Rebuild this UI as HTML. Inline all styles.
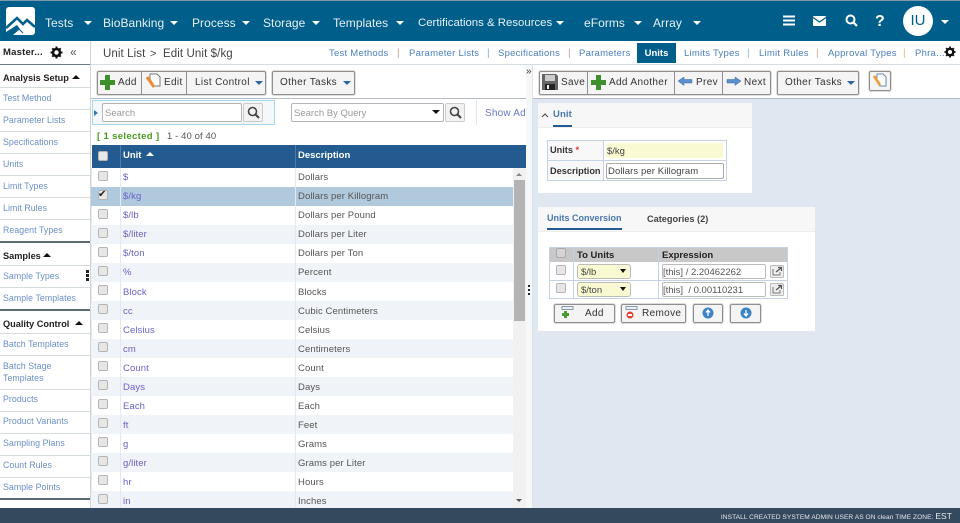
<!DOCTYPE html>
<html><head><meta charset="utf-8">
<style>
html,body{margin:0;padding:0;width:960px;height:523px;overflow:hidden;background:#fff}
body{position:relative;font-family:"Liberation Sans",sans-serif;font-size:9.5px;color:#444;filter:blur(.3px)}
div,span.a,svg{position:absolute}
.t{white-space:nowrap;height:14px;line-height:14px;margin-top:1px}
.n{color:#e8f0f5;font-size:12px;letter-spacing:.05px}
.l{color:#4a7fc0;font-size:9.5px;letter-spacing:.25px}
.s{color:#6a8fc8;font-size:8.8px;letter-spacing:.05px;left:3px;margin-top:0}
.h{color:#222;font-weight:bold;font-size:9.2px;left:3px}
.sl{height:1px;left:0;width:90px;background:#d5dcdc}
.dl{height:2px;left:0;width:90px;background:#5a6a72}
.u{color:#6a62c8;left:123px;font-size:9.5px;letter-spacing:.1px}
.d{color:#555;left:298px;font-size:9.5px;letter-spacing:.1px}
.cb{width:8px;height:8px;background:#e6e6e6;border:1px solid #b4b4b4;border-radius:2px}
.row{left:91px;width:422px;height:19px}
.alt{background:#f0f3f7}
.btn{background:#f4f4f4;border:1px solid #8f8f8f;border-radius:2px;box-shadow:0 0 0 1px #ddd;box-sizing:border-box}
.sep{width:1px;background:#8f8f8f;top:71px;height:24px}
.b{color:#333;font-size:10px;letter-spacing:.35px}
.tri{width:0;height:0;border-left:4px solid transparent;border-right:4px solid transparent;border-top:4px solid #fff}
.btri{width:0;height:0;border-left:4px solid transparent;border-right:4px solid transparent;border-top:4px solid #2a66a8}
.ktri{width:0;height:0;border-left:3px solid transparent;border-right:3px solid transparent;border-top:4px solid #111}
.up{width:0;height:0;border-left:4px solid transparent;border-right:4px solid transparent;border-bottom:4px solid #111}
.bar{color:#c99;font-size:10px}
</style></head><body>

<!-- top nav -->
<div style="left:0;top:0;width:960px;height:41px;background:#005e8a"></div>
<div style="left:0;top:0;width:960px;height:1px;background:#7c9aa8"></div>
<svg style="left:6px;top:7px" width="29" height="28" viewBox="0 0 29 28"><rect x="0" y="0" width="29" height="28" rx="3" fill="#fff"/><path d="M0 21 L11 11 L17 17 L21 13 L29 20" fill="none" stroke="#005e8a" stroke-width="2.600"/><path d="M0 25 L0 28 L7 28 L14 22 L11 18Z" fill="#005e8a"/><path d="M0 29 L10 19 L17 26" fill="none" stroke="#005e8a" stroke-width="1"/></svg>
<div class="t n" style="left:45px;top:15px">Tests</div><div class="tri" style="left:84px;top:21px"></div>
<div class="t n" style="left:103px;top:15px">BioBanking</div><div class="tri" style="left:170px;top:21px"></div>
<div class="t n" style="left:192px;top:15px">Process</div><div class="tri" style="left:242px;top:21px"></div>
<div class="t n" style="left:263px;top:15px">Storage</div><div class="tri" style="left:312px;top:21px"></div>
<div class="t n" style="left:333px;top:15px">Templates</div><div class="tri" style="left:396px;top:21px"></div>
<div class="t n" style="left:418px;top:15px;font-size:11.4px;letter-spacing:0">Certifications &amp; Resources</div><div class="tri" style="left:556px;top:21px"></div>
<div class="t n" style="left:584px;top:15px">eForms</div><div class="tri" style="left:634px;top:21px"></div>
<div class="t n" style="left:653px;top:15px">Array</div><div class="tri" style="left:693px;top:21px"></div>
<svg style="left:782px;top:14px" width="14" height="13"><path d="M1 2.500H13M1 6.500H13M1 10.500H13" stroke="#fff" stroke-width="2"/></svg>
<svg style="left:813px;top:16px" width="13" height="10"><rect width="13" height="10" rx="1" fill="#fff"/><path d="M0 1.500L6.500 6L13 1.500" fill="none" stroke="#005e8a" stroke-width="1.200"/></svg>
<svg style="left:845px;top:14px" width="13" height="13"><circle cx="5.500" cy="5.500" r="4" fill="none" stroke="#fff" stroke-width="2"/><path d="M8.500 8.500L12 12" stroke="#fff" stroke-width="2.200"/></svg>
<div class="t" style="left:875px;top:14px;font-size:16px;font-weight:bold;color:#fff">?</div>
<div style="left:903px;top:6px;width:30px;height:30px;border-radius:50%;background:#fff"></div>
<div class="t" style="left:903px;top:13px;width:30px;text-align:center;font-size:15px;color:#005e8a">IU</div>
<div class="tri" style="left:941px;top:20px"></div>

<!-- sidebar -->
<div style="left:90px;top:41px;width:1px;height:467px;background:#d0d5da"></div>
<div class="t" style="left:3px;top:45px;font-weight:bold;color:#222;font-size:9.5px;letter-spacing:.2px">Master...</div>
<svg style="left:50px;top:46px" width="13" height="13" viewBox="0 0 13 13"><circle cx="6.500" cy="6.500" r="3.500" fill="none" stroke="#111" stroke-width="2.600"/><path d="M6.500 0.500V3M6.500 10V12.500M0.500 6.500H3M10 6.500H12.500M2.300 2.300L4 4M9 9L10.700 10.700M2.300 10.700L4 9M9 4L10.700 2.300" stroke="#111" stroke-width="2"/></svg>
<div class="t" style="left:70px;top:44px;color:#555;font-size:12px">«</div>
<div style="left:0;top:64px;width:90px;height:1px;background:#6b7b85"></div>
<div class="t h" style="top:70px">Analysis Setup</div><div class="up" style="left:72px;top:75px"></div>
<div class="sl" style="top:87px"></div>
<div class="t s" style="top:91px">Test Method</div><div class="sl" style="top:109px"></div>
<div class="t s" style="top:113px">Parameter Lists</div><div class="sl" style="top:131px"></div>
<div class="t s" style="top:135px">Specifications</div><div class="sl" style="top:153px"></div>
<div class="t s" style="top:157px">Units</div><div class="sl" style="top:175px"></div>
<div class="t s" style="top:179px">Limit Types</div><div class="sl" style="top:197px"></div>
<div class="t s" style="top:201px">Limit Rules</div><div class="sl" style="top:219px"></div>
<div class="t s" style="top:223px">Reagent Types</div>
<div class="dl" style="top:241px"></div>
<div class="t h" style="top:248px">Samples</div><div class="up" style="left:43px;top:253px"></div>
<div class="sl" style="top:265px"></div>
<div class="t s" style="top:269px">Sample Types</div><div class="sl" style="top:287px"></div>
<div style="left:86px;top:270px;width:3px;height:3px;background:#222"></div><div style="left:86px;top:274px;width:3px;height:3px;background:#222"></div><div style="left:86px;top:278px;width:3px;height:3px;background:#222"></div>
<div class="t s" style="top:291px">Sample Templates</div>
<div class="dl" style="top:309px"></div>
<div class="t h" style="top:316px">Quality Control</div><div class="up" style="left:75px;top:321px"></div>
<div class="sl" style="top:333px"></div>
<div class="t s" style="top:337px">Batch Templates</div><div class="sl" style="top:355px"></div>
<div class="t s" style="top:359px">Batch Stage</div><div class="t s" style="top:371px">Templates</div><div class="sl" style="top:389px"></div>
<div class="t s" style="top:392px">Products</div><div class="sl" style="top:411px"></div>
<div class="t s" style="top:414px">Product Variants</div><div class="sl" style="top:433px"></div>
<div class="t s" style="top:436px">Sampling Plans</div><div class="sl" style="top:455px"></div>
<div class="t s" style="top:458px">Count Rules</div><div class="sl" style="top:477px"></div>
<div class="t s" style="top:480px">Sample Points</div>
<div class="dl" style="top:498px"></div>

<!-- breadcrumb / tabs -->
<div class="t" style="left:103px;top:46px;font-size:11.5px;color:#444;letter-spacing:.1px">Unit List</div>
<div class="t" style="left:150px;top:46px;font-size:11px;color:#444">&gt;</div>
<div class="t" style="left:163px;top:46px;font-size:11.5px;color:#444;letter-spacing:.1px">Edit Unit $/kg</div>
<div class="t l" style="left:329px;top:46px">Test Methods</div><div class="t bar" style="left:397px;top:46px">|</div>
<div class="t l" style="left:409px;top:46px">Parameter Lists</div><div class="t bar" style="left:487px;top:46px;color:#8ab">|</div>
<div class="t l" style="left:498px;top:46px">Specifications</div><div class="t bar" style="left:568px;top:46px">|</div>
<div class="t l" style="left:579px;top:46px">Parameters</div>
<div style="left:637px;top:43px;width:39px;height:20px;background:#005e8a"></div>
<div class="t" style="left:637px;top:46px;width:39px;text-align:center;color:#fff;font-size:9.500px;font-weight:bold">Units</div>
<div class="t l" style="left:684px;top:46px">Limits Types</div><div class="t bar" style="left:747px;top:46px;color:#8bb">|</div>
<div class="t l" style="left:759px;top:46px">Limit Rules</div><div class="t bar" style="left:816px;top:46px;color:#ca8">|</div>
<div class="t l" style="left:828px;top:46px">Approval Types</div><div class="t bar" style="left:903px;top:46px;color:#db7">|</div>
<div class="t l" style="left:915px;top:46px">Phra...</div>
<svg style="left:944px;top:46px" width="12" height="12" viewBox="0 0 13 13"><circle cx="6.500" cy="6.500" r="3.500" fill="none" stroke="#111" stroke-width="2.600"/><path d="M6.500 0.500V3M6.500 10V12.500M0.500 6.500H3M10 6.500H12.500M2.300 2.300L4 4M9 9L10.700 10.700M2.300 10.700L4 9M9 4L10.700 2.300" stroke="#111" stroke-width="2"/></svg>
<div style="left:91px;top:64px;width:869px;height:1px;background:#d5dce2"></div>

<!-- left toolbar -->
<div class="btn" style="left:97px;top:71px;width:169px;height:24px"></div>
<div class="sep" style="left:141px"></div><div class="sep" style="left:186px"></div>
<svg style="left:100px;top:75px" width="15" height="15"><path d="M5 0H10V5H15V10H10V15H5V10H0V5H5Z" fill="#3f8f2c"/></svg>
<div class="t b" style="left:118px;top:75px">Add</div>
<svg style="left:146px;top:73px" width="15" height="17"><path d="M4 1H11L14 4V13H8L4 6Z" fill="#fff" stroke="#777"/><path d="M1 4L8 14" stroke="#ee8a30" stroke-width="3"/></svg>
<div class="t b" style="left:164px;top:75px">Edit</div>
<div class="t b" style="left:195px;top:75px">List Control</div><div class="btri" style="left:255px;top:81px"></div>
<div class="btn" style="left:272px;top:71px;width:83px;height:24px"></div>
<div class="t b" style="left:280px;top:75px">Other Tasks</div><div class="btri" style="left:343px;top:81px"></div>

<!-- splitter -->
<div style="left:526px;top:65px;width:7px;height:443px;background:#f5f7f9"></div>
<div style="left:532px;top:65px;width:1px;height:443px;background:#dfe4ea"></div>
<div class="t" style="left:526px;top:64px;font-size:10px;color:#333">»</div>
<div style="left:528px;top:285px;width:2px;height:2px;background:#222"></div><div style="left:528px;top:289px;width:2px;height:2px;background:#222"></div><div style="left:528px;top:293px;width:2px;height:2px;background:#222"></div>

<!-- list region -->
<div style="left:91px;top:98px;width:435px;height:1px;background:#b5bcc4"></div>
<div style="left:92px;top:100px;width:183px;height:25px;border:1px solid #a8d4ee;box-sizing:border-box;background:#f4f8fb"></div>
<div style="left:94px;top:110px;width:0;height:0;border-top:3px solid transparent;border-bottom:3px solid transparent;border-left:4px solid #3a78b0"></div>
<div style="left:102px;top:103px;width:140px;height:19px;background:#fff;border:1px solid #b5b5b5;border-radius:2px;box-sizing:border-box"></div>
<div class="t" style="left:105px;top:106px;color:#999;font-size:9.500px">Search</div>
<div style="left:243px;top:103px;width:20px;height:19px;background:#f2f2f2;border:1px solid #ccc;border-radius:2px;box-sizing:border-box"></div>
<svg style="left:247px;top:106px" width="13" height="13"><circle cx="5.500" cy="5.500" r="4" fill="none" stroke="#444" stroke-width="1.600"/><path d="M8.500 8.500L12 12" stroke="#444" stroke-width="2"/></svg>
<div style="left:291px;top:103px;width:153px;height:19px;background:#fff;border:1px solid #b5b5b5;border-radius:2px;box-sizing:border-box"></div>
<div class="t" style="left:294px;top:106px;color:#999;font-size:9.500px">Search By Query</div>
<div class="ktri" style="left:432px;top:110px;border-left-width:4px;border-right-width:4px"></div>
<div style="left:445px;top:103px;width:20px;height:19px;background:#f2f2f2;border:1px solid #ccc;border-radius:2px;box-sizing:border-box"></div>
<svg style="left:449px;top:106px" width="13" height="13"><circle cx="5.500" cy="5.500" r="4" fill="none" stroke="#444" stroke-width="1.600"/><path d="M8.500 8.500L12 12" stroke="#444" stroke-width="2"/></svg>
<div style="left:476px;top:100px;width:1px;height:25px;background:#dce6ee"></div>
<div class="t" style="left:485px;top:106px;color:#6a78c8;font-size:10px;letter-spacing:.2px;width:41px;overflow:hidden">Show Ad</div>
<div style="left:91px;top:125px;width:435px;height:20px;background:#fff"></div>
<div class="t" style="left:97px;top:129px;color:#4a9a20;font-weight:bold;font-size:9.500px;letter-spacing:.35px">[ 1 selected ]</div>
<div class="t" style="left:167px;top:129px;color:#555;font-size:9.500px;letter-spacing:.1px">1 - 40 of 40</div>

<!-- table header -->
<div style="left:92px;top:145px;width:434px;height:23px;background:#235a8f"></div>
<div style="left:120px;top:145px;width:1px;height:23px;background:#4f7ba6"></div>
<div style="left:295px;top:145px;width:1px;height:23px;background:#4f7ba6"></div>
<div class="cb" style="left:98px;top:151px;background:#e8e8e8"></div>
<div class="t" style="left:123px;top:148px;color:#fff;font-weight:bold;font-size:9.500px">Unit</div>
<div style="left:146px;top:152px;width:0;height:0;border-left:4px solid transparent;border-right:4px solid transparent;border-bottom:4px solid #fff"></div>
<div class="t" style="left:298px;top:148px;color:#fff;font-weight:bold;font-size:9.500px">Description</div>

<!-- table rows -->
<div style="left:91px;top:168px;width:1px;height:340px;background:#e4e8ec"></div>
<div class="row" style="top:187px;background:#b0c9dd;height:19px"></div>
<div class="row alt" style="top:225px"></div><div class="row alt" style="top:263px"></div><div class="row alt" style="top:301px"></div><div class="row alt" style="top:339px"></div><div class="row alt" style="top:377px"></div><div class="row alt" style="top:415px"></div><div class="row alt" style="top:453px"></div><div class="row alt" style="top:491px;height:17px"></div>
<div style="left:120px;top:168px;width:1px;height:340px;background:#e4e8f0"></div>
<div style="left:295px;top:168px;width:1px;height:340px;background:#e4e8f0"></div>

<div class="cb" style="left:98px;top:171px"></div><div class="t u" style="top:170px">$</div><div class="t d" style="top:170px">Dollars</div>
<div class="cb" style="left:98px;top:190px"></div><div class="t" style="left:98px;top:187px;font-size:10px;color:#222">&#10004;</div><div class="t u" style="top:189px">$/kg</div><div class="t d" style="top:189px">Dollars per Killogram</div>
<div class="cb" style="left:98px;top:209px"></div><div class="t u" style="top:208px">$/lb</div><div class="t d" style="top:208px">Dollars per Pound</div>
<div class="cb" style="left:98px;top:228px"></div><div class="t u" style="top:227px">$/liter</div><div class="t d" style="top:227px">Dollars per Liter</div>
<div class="cb" style="left:98px;top:247px"></div><div class="t u" style="top:246px">$/ton</div><div class="t d" style="top:246px">Dollars per Ton</div>
<div class="cb" style="left:98px;top:266px"></div><div class="t u" style="top:265px">%</div><div class="t d" style="top:265px">Percent</div>
<div class="cb" style="left:98px;top:285px"></div><div class="t u" style="top:285px">Block</div><div class="t d" style="top:285px">Blocks</div>
<div class="cb" style="left:98px;top:304px"></div><div class="t u" style="top:304px">cc</div><div class="t d" style="top:304px">Cubic Centimeters</div>
<div class="cb" style="left:98px;top:323px"></div><div class="t u" style="top:323px">Celsius</div><div class="t d" style="top:323px">Celsius</div>
<div class="cb" style="left:98px;top:342px"></div><div class="t u" style="top:342px">cm</div><div class="t d" style="top:342px">Centimeters</div>
<div class="cb" style="left:98px;top:361px"></div><div class="t u" style="top:361px">Count</div><div class="t d" style="top:361px">Count</div>
<div class="cb" style="left:98px;top:380px"></div><div class="t u" style="top:380px">Days</div><div class="t d" style="top:380px">Days</div>
<div class="cb" style="left:98px;top:399px"></div><div class="t u" style="top:399px">Each</div><div class="t d" style="top:399px">Each</div>
<div class="cb" style="left:98px;top:418px"></div><div class="t u" style="top:418px">ft</div><div class="t d" style="top:418px">Feet</div>
<div class="cb" style="left:98px;top:437px"></div><div class="t u" style="top:437px">g</div><div class="t d" style="top:437px">Grams</div>
<div class="cb" style="left:98px;top:456px"></div><div class="t u" style="top:456px">g/liter</div><div class="t d" style="top:456px">Grams per Liter</div>
<div class="cb" style="left:98px;top:475px"></div><div class="t u" style="top:475px">hr</div><div class="t d" style="top:475px">Hours</div>
<div class="cb" style="left:98px;top:494px"></div><div class="t u" style="top:494px">in</div><div class="t d" style="top:494px">Inches</div>

<!-- scrollbar -->
<div style="left:513px;top:168px;width:13px;height:340px;background:#f1f1f1"></div>
<div style="left:514px;top:180px;width:11px;height:141px;background:#b4b4b4"></div>
<div style="left:516px;top:173px;width:0;height:0;border-left:3px solid transparent;border-right:3px solid transparent;border-bottom:3px solid #888"></div>
<div style="left:516px;top:499px;width:0;height:0;border-left:3px solid transparent;border-right:3px solid transparent;border-top:3px solid #555"></div>

<!-- right toolbar -->
<div class="btn" style="left:539px;top:71px;width:232px;height:24px"></div>
<div class="sep" style="left:587px"></div><div class="sep" style="left:674px"></div><div class="sep" style="left:722px"></div>
<svg style="left:542px;top:74px" width="16" height="16"><path d="M0 0H14L16 2V16H0Z" fill="#666"/><rect x="3" y="1" width="10" height="6" fill="#ccc"/><rect x="3" y="10" width="10" height="6" fill="#222"/><rect x="5" y="11" width="2" height="4" fill="#eee"/></svg>
<div class="t b" style="left:561px;top:75px">Save</div>
<svg style="left:591px;top:75px" width="15" height="15"><path d="M5 0H10V5H15V10H10V15H5V10H0V5H5Z" fill="#3f8f2c"/></svg>
<div class="t b" style="left:609px;top:75px">Add Another</div>
<svg style="left:678px;top:76px" width="15" height="10"><path d="M0 5L6 1V3.500H14V7H6V9.500Z" fill="#5a8fd0" stroke="#3a68a0" stroke-width=".5"/></svg>
<div class="t b" style="left:696px;top:75px">Prev</div>
<svg style="left:726px;top:76px" width="15" height="10"><path d="M15 5L9 1V3.500H1V7H9V9.500Z" fill="#5a8fd0" stroke="#3a68a0" stroke-width=".5"/></svg>
<div class="t b" style="left:744px;top:75px">Next</div>
<div class="btn" style="left:777px;top:71px;width:82px;height:24px"></div>
<div class="t b" style="left:785px;top:75px">Other Tasks</div><div class="btri" style="left:847px;top:81px"></div>
<div class="btn" style="left:869px;top:71px;width:22px;height:20px"></div>
<svg style="left:873px;top:73px" width="14" height="15"><path d="M4 1H10L13 4V13H7L4 7Z" fill="#fff" stroke="#6a8ab0"/><path d="M1 3L7 12" stroke="#ee9a30" stroke-width="2.500"/></svg>

<!-- right panel -->
<div style="left:533px;top:98px;width:427px;height:410px;background:#e1e7f0"></div>
<div style="left:533px;top:98px;width:427px;height:1px;background:#b5bcc4"></div>

<!-- unit card -->
<div style="left:538px;top:103px;width:214px;height:90px;background:#fff"></div>
<div style="left:538px;top:103px;width:214px;height:25px;background:#f7f7f7;border-bottom:1px solid #eee;box-sizing:border-box"></div>
<svg style="left:541px;top:112px" width="8" height="6"><path d="M1 5L4 2L7 5" fill="none" stroke="#555" stroke-width="1.200"/></svg>
<div class="t" style="left:553px;top:107px;color:#4a78b0;font-size:9.500px;font-weight:bold;letter-spacing:.1px">Unit</div>
<div style="left:553px;top:125px;width:19px;height:2px;background:#235a8f"></div>
<div style="left:547px;top:140px;width:180px;height:41px;border:1px solid #c4d2e4;box-sizing:border-box"></div>
<div style="left:548px;top:141px;width:55px;height:39px;background:#f8f8f8"></div>
<div style="left:603px;top:141px;width:1px;height:39px;background:#c4d2e4"></div>
<div style="left:548px;top:160px;width:178px;height:1px;background:#c4d2e4"></div>
<div class="t" style="left:550px;top:142px;color:#333;font-weight:bold;font-size:9.200px">Units <span style="color:#e33">*</span></div>
<div class="t" style="left:550px;top:163px;color:#333;font-weight:bold;font-size:9.200px">Description</div>
<div style="left:606px;top:143px;width:117px;height:15px;background:#fafad2;border-radius:2px"></div>
<div class="t" style="left:607px;top:144px;font-size:9.500px;color:#444">$/kg</div>
<div style="left:606px;top:163px;width:118px;height:16px;background:#fff;border:1px solid #aaa;border-radius:2px;box-sizing:border-box"></div>
<div class="t" style="left:608px;top:164px;font-size:9.500px;color:#444;letter-spacing:.1px">Dollars per Killogram</div>

<!-- conversion card -->
<div style="left:538px;top:207px;width:277px;height:124px;background:#fff"></div>
<div style="left:538px;top:207px;width:277px;height:25px;background:#f7f7f7;border-bottom:1px solid #eee;box-sizing:border-box"></div>
<div class="t" style="left:547px;top:210px;color:#4a78b0;font-size:9px;font-weight:bold;letter-spacing:0">Units Conversion</div>
<div style="left:547px;top:228px;width:75px;height:2px;background:#235a8f"></div>
<div class="t" style="left:647px;top:211px;color:#444;font-size:9.200px;font-weight:bold">Categories (2)</div>

<div style="left:549px;top:247px;width:239px;height:52px;border:1px solid #c4d2e4;box-sizing:border-box"></div>
<div style="left:550px;top:248px;width:237px;height:14px;background:#c8c8c8"></div>
<div style="left:573px;top:248px;width:1px;height:50px;background:#c4d2e4"></div>
<div style="left:658px;top:248px;width:1px;height:50px;background:#c4d2e4"></div>
<div style="left:550px;top:280px;width:237px;height:1px;background:#c4d2e4"></div>
<div class="cb" style="left:556px;top:248px;background:#d4d4d4;border-color:#aaa"></div>
<div class="t" style="left:577px;top:248px;color:#222;font-weight:bold;font-size:9.500px">To Units</div>
<div class="t" style="left:662px;top:248px;color:#222;font-weight:bold;font-size:9.500px">Expression</div>

<div class="cb" style="left:556px;top:265px"></div>
<div style="left:577px;top:264px;width:54px;height:15px;background:#fafad2;border:1px solid #bbb;border-radius:3px;box-sizing:border-box"></div>
<div class="t" style="left:581px;top:265px;font-size:9.500px;color:#444">$/lb</div><div class="ktri" style="left:620px;top:269px"></div>
<div style="left:662px;top:264px;width:104px;height:15px;background:#fff;border:1px solid #bbb;border-radius:2px;box-sizing:border-box"></div>
<div class="t" style="left:663px;top:265px;font-size:9.500px;color:#555">[this] / 2.20462262</div>
<svg style="left:770px;top:265px" width="14" height="13"><rect x="0.500" y="0.500" width="13" height="12" rx="1" fill="#eee" stroke="#bbb"/><path d="M3 4V10H10V7" fill="none" stroke="#777"/><path d="M6 7L11 3M8 2.500H11.500V6" fill="none" stroke="#555" stroke-width="1.200"/></svg>
<div class="cb" style="left:556px;top:283px"></div>
<div style="left:577px;top:282px;width:54px;height:15px;background:#fafad2;border:1px solid #bbb;border-radius:3px;box-sizing:border-box"></div>
<div class="t" style="left:581px;top:283px;font-size:9.500px;color:#444">$/ton</div><div class="ktri" style="left:620px;top:287px"></div>
<div style="left:662px;top:282px;width:104px;height:15px;background:#fff;border:1px solid #bbb;border-radius:2px;box-sizing:border-box"></div>
<div class="t" style="left:663px;top:283px;font-size:9.500px;color:#555">[this]&nbsp; / 0.00110231</div>
<svg style="left:770px;top:283px" width="14" height="13"><rect x="0.500" y="0.500" width="13" height="12" rx="1" fill="#eee" stroke="#bbb"/><path d="M3 4V10H10V7" fill="none" stroke="#777"/><path d="M6 7L11 3M8 2.500H11.500V6" fill="none" stroke="#555" stroke-width="1.200"/></svg>

<div class="btn" style="left:554px;top:304px;width:61px;height:19px"></div>
<svg style="left:561px;top:306px" width="14" height="14"><rect x="1" y="0.500" width="11" height="3" fill="#eef" stroke="#89a"/><path d="M3 5H6V7H8V10H6V12H3V10H1V7H3Z" fill="#4a9a30"/></svg>
<div class="t b" style="left:585px;top:306px">Add</div>
<div class="btn" style="left:621px;top:304px;width:65px;height:19px"></div>
<svg style="left:625px;top:306px" width="14" height="14"><rect x="1" y="0.500" width="11" height="3" fill="#eef" stroke="#89a"/><circle cx="5" cy="9" r="3.500" fill="#e04030"/><rect x="3" y="8" width="4" height="2" fill="#fff"/></svg>
<div class="t b" style="left:642px;top:306px">Remove</div>
<div class="btn" style="left:693px;top:304px;width:30px;height:19px"></div>
<svg style="left:702px;top:307px" width="12" height="12"><circle cx="6" cy="6" r="5.500" fill="#3c82c8"/><path d="M6 9V4M4 5.500L6 3L8 5.500" fill="none" stroke="#fff" stroke-width="1.300"/></svg>
<div class="btn" style="left:730px;top:304px;width:31px;height:19px"></div>
<svg style="left:740px;top:307px" width="12" height="12"><circle cx="6" cy="6" r="5.500" fill="#3c82c8"/><path d="M6 3V8M4 6.500L6 9L8 6.500" fill="none" stroke="#fff" stroke-width="1.300"/></svg>

<!-- footer -->
<div style="left:0;top:508px;width:960px;height:15px;background:#34495e"></div>
<div class="t" style="right:8px;top:508px;color:#e4e8ec;font-size:6.600px;letter-spacing:.05px">INSTALL CREATED SYSTEM ADMIN USER AS ON clean TIME ZONE: <span style="font-size:8.500px">EST</span></div>
</body></html>
